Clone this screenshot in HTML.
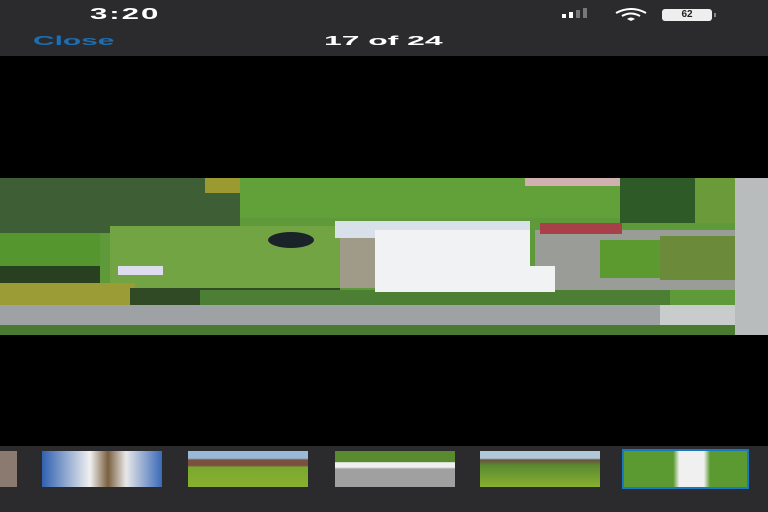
<!DOCTYPE html>
<html><head><style>
*{margin:0;padding:0;box-sizing:border-box}
body{width:768px;height:512px;background:#000;position:relative;overflow:hidden;font-family:"Liberation Sans",sans-serif}
.a{position:absolute}
</style></head><body>
<div class="a" style="left:0;top:0;width:768px;height:56px;background:#2b2b2d"></div>
<div class="a" style="left:90px;top:6px;color:#fff;font-weight:bold;font-size:16px;letter-spacing:1px;transform:scaleX(1.95);transform-origin:left">3:20</div>
<div class="a" style="left:562px;top:14px;width:4px;height:4px;background:#fff"></div>
<div class="a" style="left:569px;top:12px;width:4px;height:6px;background:#fff"></div>
<div class="a" style="left:576px;top:10px;width:4px;height:8px;background:#777"></div>
<div class="a" style="left:583px;top:8px;width:4px;height:10px;background:#777"></div>
<svg class="a" style="left:614px;top:8px" width="34" height="14" viewBox="0 0 34 14"><path d="M2 5 Q17 -3 32 5" stroke="#fff" stroke-width="2" fill="none"/><path d="M8 8 Q17 3 26 8" stroke="#fff" stroke-width="2" fill="none"/><path d="M13 11 L17 13 L21 11 Q17 8 13 11Z" fill="#fff"/></svg>
<div class="a" style="left:662px;top:9px;width:50px;height:12px;background:#eee;border-radius:3px;color:#222;font-size:10px;font-weight:bold;text-align:center;line-height:12px">62</div>
<div class="a" style="left:714px;top:13px;width:2px;height:4px;background:#888"></div>
<div class="a" style="left:33px;top:33px;color:#1a6fb5;font-weight:bold;font-size:13px;transform:scaleX(2.3);transform-origin:left">Close</div>
<div class="a" style="left:324px;top:33px;color:#fff;font-weight:bold;font-size:13px;transform:scaleX(2.45);transform-origin:left">17 of 24</div>

<div class="a" style="left:0;top:178px;width:768px;height:157px;background:#5f9a3a;overflow:hidden">
 <div class="a" style="left:0;top:0;width:240px;height:55px;background:#3e5e35"></div>
 <div class="a" style="left:205px;top:0;width:100px;height:15px;background:#9a9a30"></div>
 <div class="a" style="left:240px;top:0;width:380px;height:40px;background:#62a03a"></div>
 <div class="a" style="left:620px;top:0;width:75px;height:45px;background:#2e5a28"></div>
 <div class="a" style="left:695px;top:0;width:40px;height:45px;background:#6a9a3a"></div>
 <div class="a" style="left:525px;top:0;width:95px;height:8px;background:#d0b0b0"></div>
 <div class="a" style="left:0;top:55px;width:100px;height:35px;background:#55962e"></div>
 <div class="a" style="left:110px;top:48px;width:230px;height:65px;background:#72a444"></div>
 <div class="a" style="left:0;top:88px;width:100px;height:20px;background:#28401f"></div>
 <div class="a" style="left:0;top:105px;width:135px;height:38px;background:#9c9c36"></div>
 <div class="a" style="left:130px;top:110px;width:210px;height:20px;background:#2f4a25"></div>
 <div class="a" style="left:200px;top:112px;width:470px;height:17px;background:#4c7f33"></div>
 <div class="a" style="left:535px;top:52px;width:200px;height:60px;background:#9a9c98"></div>
 <div class="a" style="left:600px;top:62px;width:60px;height:38px;background:#5c9a30"></div>
 <div class="a" style="left:660px;top:58px;width:75px;height:44px;background:#6b8a3a"></div>
 <div class="a" style="left:540px;top:45px;width:82px;height:11px;background:#a8404a"></div>
 <div class="a" style="left:340px;top:45px;width:40px;height:65px;background:#a09a88"></div>
 <div class="a" style="left:335px;top:43px;width:195px;height:17px;background:#d8e0ea"></div>
 <div class="a" style="left:375px;top:52px;width:155px;height:62px;background:#f0f2f4"></div>
 <div class="a" style="left:383px;top:88px;width:172px;height:26px;background:#f0f2f4"></div>
 <div class="a" style="left:268px;top:54px;width:46px;height:16px;border-radius:50%;background:#1a2428"></div>
 <div class="a" style="left:118px;top:88px;width:45px;height:9px;background:#dde"></div>
 <div class="a" style="left:0;top:127px;width:745px;height:20px;background:#9ea2a4"></div>
 <div class="a" style="left:660px;top:127px;width:85px;height:20px;background:#c8cccc"></div>
 <div class="a" style="left:0;top:147px;width:745px;height:10px;background:#4a7a30"></div>
 <div class="a" style="left:735px;top:0;width:33px;height:157px;background:#b8bcbc"></div>
</div>

<div class="a" style="left:0;top:446px;width:768px;height:66px;background:#2b2b2d"></div>
<div class="a" style="left:0;top:451px;width:17px;height:36px;background:#8a7a70"></div>
<div class="a" style="left:42px;top:451px;width:120px;height:36px;background:linear-gradient(90deg,#3060b0 0,#f0f0f0 40%,#7a6040 55%,#e8e8e8 70%,#3a6ab8 100%)"></div>
<div class="a" style="left:188px;top:451px;width:120px;height:36px;background:linear-gradient(#9ab8d8 0,#9ab8d8 20%,#7a5040 25%,#7a5040 40%,#7aa830 45%,#88b030 100%)"></div>
<div class="a" style="left:335px;top:451px;width:120px;height:36px;background:linear-gradient(#5a8a30 0,#5a8a30 30%,#f0f0f0 32%,#f0f0f0 45%,#a0a0a0 50%,#a0a0a0 100%)"></div>
<div class="a" style="left:480px;top:451px;width:120px;height:36px;background:linear-gradient(#b0c8d8 0,#b0c8d8 20%,#6a5040 25%,#5a8a30 40%,#88b030 100%)"></div>
<div class="a" style="left:622px;top:449px;width:127px;height:40px;border:2px solid #1a78c0;background:linear-gradient(90deg,#5a9a30 0,#5a9a30 40%,#f0f0f0 45%,#f0f0f0 65%,#5a9a30 70%)"></div>
</body></html>
